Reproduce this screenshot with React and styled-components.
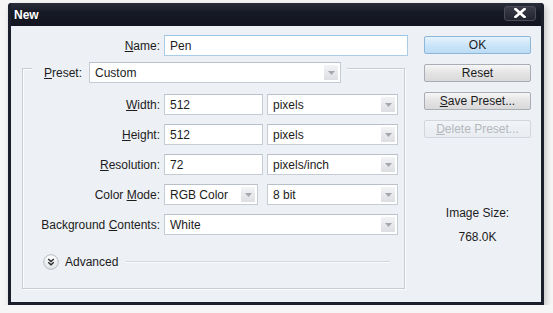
import React from "react";
import styled, { createGlobalStyle } from "styled-components";

const Global = createGlobalStyle`
  html, body { margin: 0; padding: 0; background: #f6f6f6; }
  body {
    font-family: "Liberation Sans", Arial, sans-serif;
    font-size: 12px;
    color: #1c1c1c;
  }
  * { box-sizing: border-box; }
`;

const Page = styled.div`
  padding: 3px 0 0 8px;
`;

const Window = styled.div`
  width: 536px;
  height: 302px;
  background: #1b1e2b;
  border-radius: 3px 3px 0 0;
  padding: 0 3px 3px;
  display: flex;
  flex-direction: column;
  box-shadow: 2px 3px 6px rgba(0, 0, 0, 0.22);
`;

const TitleBar = styled.div`
  height: 23px;
  display: flex;
  align-items: center;
  justify-content: space-between;
  padding: 0 5px 0 3px;
  background: linear-gradient(#2a2d3b, #171a26 40%, #12141f);
  border-radius: 3px 3px 0 0;
`;

const Title = styled.span`
  color: #ffffff;
  font-weight: bold;
  font-size: 12px;
  margin-top: 1px;
`;

const CloseButton = styled.div`
  width: 32px;
  height: 15px;
  margin-top: -3px;
  border: 1px solid #4a4d58;
  border-radius: 3px;
  background: linear-gradient(#3a3d48, #22252f);
  display: flex;
  align-items: center;
  justify-content: center;
`;

const Content = styled.div`
  flex: 1;
  background: #edf0f5;
  display: flex;
  padding: 9px 10px 0 0;
`;

const LeftColumn = styled.div`
  width: 397px;
  display: flex;
  flex-direction: column;
`;

const Row = styled.div`
  display: flex;
  align-items: center;
  height: 21px;
  gap: 4px;
`;

const Label = styled.span`
  width: ${(p) => p.$w}px;
  flex: none;
  text-align: right;
  white-space: nowrap;
`;

const U = styled.span`
  text-decoration: underline;
  text-underline-offset: 1px;
`;

const TextInput = styled.div`
  width: ${(p) => (p.$w ? `${p.$w}px` : "auto")};
  flex: ${(p) => (p.$w ? "none" : 1)};
  height: 21px;
  background: #ffffff;
  border: 1px solid ${(p) => (p.$focus ? "#a9cce8" : "#c6ccd4")};
  border-top-color: ${(p) => (p.$focus ? "#9cc4e4" : "#b9c0c9")};
  padding: 0 5px;
  display: flex;
  align-items: center;
  white-space: nowrap;
`;

const SelectBox = styled.div`
  width: ${(p) => p.$w}px;
  margin-left: ${(p) => p.$ml || 0}px;
  flex: none;
  height: 21px;
  background: #ffffff;
  border: 1px solid #c6ccd4;
  border-top-color: #b9c0c9;
  display: flex;
  align-items: center;
  padding-left: 5px;
`;

const SelectText = styled.span`
  flex: 1;
  white-space: nowrap;
`;

const ArrowBox = styled.span`
  width: 14px;
  height: 15px;
  margin-right: 2px;
  background: linear-gradient(#f3f4f6, #dcdee2);
  display: flex;
  align-items: center;
  justify-content: center;
`;

const Select = ({ w, ml, children }) => (
  <SelectBox $w={w} $ml={ml}>
    <SelectText>{children}</SelectText>
    <ArrowBox>
      <svg width="7" height="4" viewBox="0 0 7 4">
        <path d="M0 0 H7 L3.5 4 Z" fill="#a4a8ae" />
      </svg>
    </ArrowBox>
  </SelectBox>
);

const GroupBox = styled.div`
  margin: 12px 0 0 11px;
  width: 383px;
  height: 221px;
  border: 1px solid #c8ccd3;
  box-shadow: inset 1px 1px 0 #fbfcfd, 1px 1px 0 #fbfcfd;
  display: flex;
  flex-direction: column;
`;

const Legend = styled.div`
  align-self: flex-start;
  margin: -7px 0 0 9px;
  padding: 0 6px 0 12px;
  background: #edf0f5;
  display: flex;
  align-items: center;
  height: 21px;
  gap: 7px;
`;

const Rows = styled.div`
  margin-top: 11px;
  display: flex;
  flex-direction: column;
  gap: 9px;
`;

const AdvancedRow = styled.div`
  margin: 19px 14px 0 20px;
  height: 16px;
  display: flex;
  align-items: center;
  gap: 6px;
`;

const Rule = styled.div`
  flex: 1;
  height: 2px;
  border-top: 1px solid #d3d7dd;
  border-bottom: 1px solid #fbfcfd;
  margin-left: 2px;
`;

const RightColumn = styled.div`
  margin-left: 16px;
  width: 107px;
  padding-top: 1px;
  display: flex;
  flex-direction: column;
  gap: 10px;
`;

const Button = styled.div`
  height: 18px;
  border: 1px solid ${(p) => (p.$primary ? "#8db6d9" : p.$disabled ? "#d3d7dd" : "#a9adb4")};
  border-radius: 2px;
  background: ${(p) =>
    p.$primary
      ? "linear-gradient(#e6f3fd, #cbe5f9 50%, #bcdcf5)"
      : p.$disabled
      ? "linear-gradient(#f2f4f7, #e9ecf0)"
      : "linear-gradient(#f6f6f6, #e4e4e4 50%, #d9d9d9)"};
  color: ${(p) => (p.$disabled ? "#b4b8be" : "#1c1c1c")};
  display: flex;
  align-items: center;
  justify-content: center;
  white-space: nowrap;
`;

const InfoBlock = styled.div`
  margin-top: 58px;
  display: flex;
  flex-direction: column;
  align-items: center;
  gap: 10px;
  line-height: 14px;
`;

export default function App() {
  return (
    <>
      <Global />
      <Page>
        <Window>
          <TitleBar>
            <Title>New</Title>
            <CloseButton>
              <svg width="12" height="10" viewBox="0 0 12 10">
                <path d="M1.5 1 L10.5 9 M10.5 1 L1.5 9" stroke="#ffffff" strokeWidth="2.6" strokeLinecap="square" />
              </svg>
            </CloseButton>
          </TitleBar>
          <Content>
            <LeftColumn>
              <Row>
                <Label $w={149}>
                  <U>N</U>ame:
                </Label>
                <TextInput $focus>Pen</TextInput>
              </Row>
              <GroupBox>
                <Legend>
                  <span>
                    <U>P</U>reset:
                  </span>
                  <Select w={252}>Custom</Select>
                </Legend>
                <Rows>
                  <Row>
                    <Label $w={137}>
                      <U>W</U>idth:
                    </Label>
                    <TextInput $w={99}>512</TextInput>
                    <Select w={131}>pixels</Select>
                  </Row>
                  <Row>
                    <Label $w={137}>
                      <U>H</U>eight:
                    </Label>
                    <TextInput $w={99}>512</TextInput>
                    <Select w={131}>pixels</Select>
                  </Row>
                  <Row>
                    <Label $w={137}>
                      <U>R</U>esolution:
                    </Label>
                    <TextInput $w={99}>72</TextInput>
                    <Select w={131}>pixels/inch</Select>
                  </Row>
                  <Row>
                    <Label $w={137}>
                      Color <U>M</U>ode:
                    </Label>
                    <Select w={94}>RGB Color</Select>
                    <Select w={131} ml={5}>8 bit</Select>
                  </Row>
                  <Row>
                    <Label $w={137}>
                      Background <U>C</U>ontents:
                    </Label>
                    <Select w={234}>White</Select>
                  </Row>
                </Rows>
                <AdvancedRow>
                  <svg width="16" height="16" viewBox="0 0 16 16">
                    <defs>
                      <linearGradient id="adv" x1="0" y1="0" x2="0" y2="1">
                        <stop offset="0" stopColor="#ffffff" />
                        <stop offset="1" stopColor="#dfe2e7" />
                      </linearGradient>
                    </defs>
                    <circle cx="8" cy="8" r="7.3" fill="url(#adv)" stroke="#b5b9c0" strokeWidth="1" />
                    <path d="M5.2 5 L8 7.6 L10.8 5 M5.2 8.2 L8 10.8 L10.8 8.2" fill="none" stroke="#2a2a2a" strokeWidth="1.3" />
                  </svg>
                  <span>Advanced</span>
                  <Rule />
                </AdvancedRow>
              </GroupBox>
            </LeftColumn>
            <RightColumn>
              <Button $primary>OK</Button>
              <Button>Reset</Button>
              <Button>
                <span>
                  <U>S</U>ave Preset...
                </span>
              </Button>
              <Button $disabled>
                <span>
                  <U>D</U>elete Preset...
                </span>
              </Button>
              <InfoBlock>
                <span>Image Size:</span>
                <span>768.0K</span>
              </InfoBlock>
            </RightColumn>
          </Content>
        </Window>
      </Page>
    </>
  );
}
